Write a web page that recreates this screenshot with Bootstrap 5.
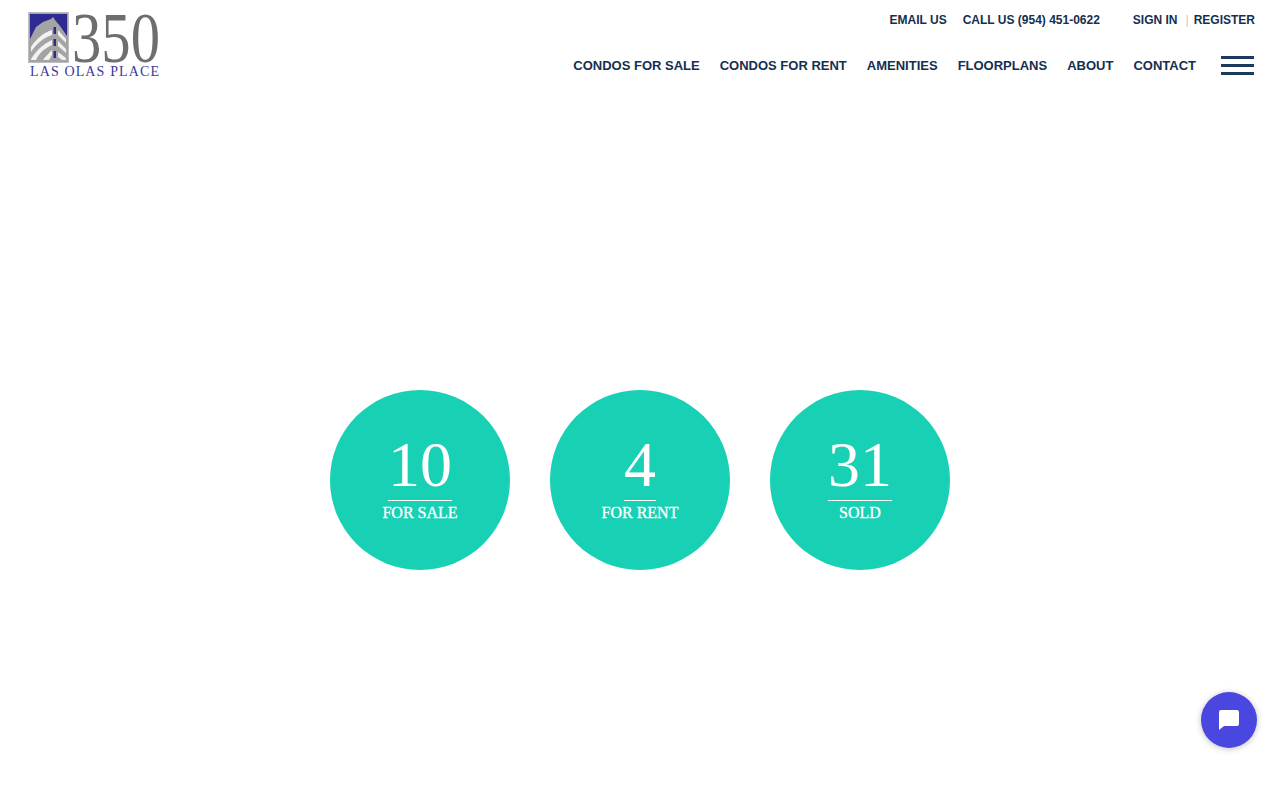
<!DOCTYPE html>
<html lang="en">
<head>
  <meta charset="UTF-8" />
  <meta name="viewport" content="width=device-width, initial-scale=1" />
  <title>350 Las Olas Place</title>
  <link href="https://cdn.jsdelivr.net/npm/bootstrap@5.3.0/dist/css/bootstrap.min.css" rel="stylesheet" />
  <style>
    body { font-family: "Liberation Sans", Arial, sans-serif; background: #fff; height: 800px; overflow: hidden; }
    .site-header { padding: 12px 26px 0 28px; height: 90px; }
    .site-logo { width: 133px; height: 66px; display: block; overflow: visible; }
    .top-links { height: 16px; margin-bottom: 28px; margin-right: -1px; font-size: 12px; font-weight: 700; color: #14304f; line-height: 16px; }
    .top-links a, .main-links a { color: #14304f; text-decoration: none; }
    .top-call { margin-left: 16px; margin-right: 33px; }
    .top-sep { color: #c8c8c8; font-weight: 400; margin: 0 5px 0 8px; }
    .main-links { font-size: 13px; font-weight: 700; line-height: 16px; gap: 20px; }
    .burger { width: 33px; margin-left: 5px; display: flex; flex-direction: column; gap: 5px; }
    .burger span { display: block; height: 3px; background: #1c3a5e; }
    .stat-row { margin-top: 300px; gap: 40px; }
    .stat-circle { width: 180px; height: 180px; border-radius: 50%; background: #18d0b4; color: #fff; font-family: "Liberation Serif", "Times New Roman", serif; padding-top: 40px; }
    .stat-num { font-size: 64px; line-height: 70px; border-bottom: 1px solid #fff; min-width: 32px; }
    .stat-label { font-size: 16px; line-height: 24px; -webkit-text-stroke: 0.3px #fff; }
    .chat-btn { position: fixed; right: 23px; bottom: 52px; width: 56px; height: 56px; border-radius: 50%; background: #4a47e0; box-shadow: 0 1px 6px rgba(0,0,0,.25); border: 0; padding: 0; }
  </style>
</head>
<body>
  <header class="site-header d-flex justify-content-between align-items-start">
    <a href="#">
      <svg class="site-logo" viewBox="0 0 133 66" aria-label="350 Las Olas Place">
        <rect x="0.5" y="0.5" width="40" height="50" fill="#a4a4a4" stroke="#bdbdbd" />
        <path d="M2 2H39V24L32 14 27 8 25 5 23 7 15 10 8 15 2 27Z" fill="#2f2a92" />
        <path d="M3 35C8 27 15 21 24 18V23C15 26 8 32 3 40ZM3 47C8 39 15 32 24 28V33C17 36 11 41 8 48H3ZM15 48C17 45 20 42 24 38V43L21 48Z" fill="#f2f2f2" />
        <path d="M30 18 38 27V31L30 23ZM30 29 38 37V41L30 34ZM30 40 38 46V48H34L30 45Z" fill="#efefef" />
        <rect x="25.500" y="15" width="2.500" height="7" fill="#2f2a92" />
        <rect x="25.500" y="27" width="2.500" height="7" fill="#2f2a92" />
        <rect x="25.500" y="39" width="2.500" height="7" fill="#2f2a92" />
        <text x="44" y="50" font-family="Liberation Serif, serif" font-size="72" textLength="88" lengthAdjust="spacingAndGlyphs" fill="#6e6e6e">350</text>
        <text x="2" y="64" font-family="Liberation Serif, serif" font-size="14" textLength="129" fill="#3b3a9c">LAS OLAS PLACE</text>
      </svg>
    </a>
    <div class="d-flex flex-column align-items-end">
      <div class="top-links d-flex">
        <a href="#">EMAIL US</a>
        <a href="#" class="top-call">CALL US (954) 451-0622</a>
        <a href="#">SIGN IN</a>
        <span class="top-sep">|</span>
        <a href="#">REGISTER</a>
      </div>
      <nav class="main-links d-flex align-items-center">
        <a href="#">CONDOS FOR SALE</a>
        <a href="#">CONDOS FOR RENT</a>
        <a href="#">AMENITIES</a>
        <a href="#">FLOORPLANS</a>
        <a href="#">ABOUT</a>
        <a href="#">CONTACT</a>
        <div class="burger"><span></span><span></span><span></span></div>
      </nav>
    </div>
  </header>

  <main class="stat-row d-flex justify-content-center">
    <div class="stat-circle d-flex flex-column align-items-center">
      <div class="stat-num">10</div>
      <div class="stat-label">FOR SALE</div>
    </div>
    <div class="stat-circle d-flex flex-column align-items-center">
      <div class="stat-num">4</div>
      <div class="stat-label">FOR RENT</div>
    </div>
    <div class="stat-circle d-flex flex-column align-items-center">
      <div class="stat-num">31</div>
      <div class="stat-label">SOLD</div>
    </div>
  </main>

  <button class="chat-btn d-flex align-items-center justify-content-center" aria-label="Chat">
    <svg width="20" height="20" viewBox="0 0 20 20"><path d="M2 0H18A2 2 0 0 1 20 2V14A2 2 0 0 1 18 16H5L0 20V2A2 2 0 0 1 2 0Z" fill="#fff" /></svg>
  </button>

  <script src="https://cdn.jsdelivr.net/npm/bootstrap@5.3.0/dist/js/bootstrap.bundle.min.js"></script>
</body>
</html>
